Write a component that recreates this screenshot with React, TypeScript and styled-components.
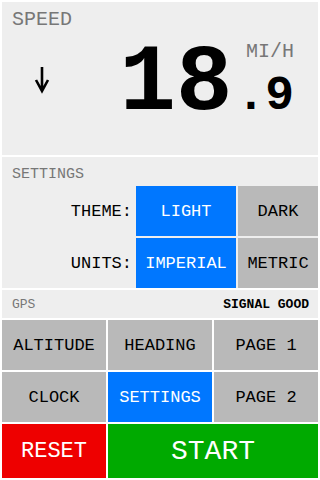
import React from "react";
import styled, { createGlobalStyle } from "styled-components";

const GlobalStyle = createGlobalStyle`
  html, body {
    margin: 0;
    padding: 0;
    background: #ffffff;
  }
  body {
    font-family: "Courier New", "Liberation Mono", monospace;
  }
`;

const Screen = styled.div`
  width: 320px;
  height: 480px;
  box-sizing: border-box;
  padding: 2px;
  display: flex;
  flex-direction: column;
  gap: 2px;
  background: #ffffff;
`;

const Panel = styled.section<{ h: number }>`
  height: ${(p) => p.h}px;
  background: #eeeeee;
  box-sizing: border-box;
  display: flex;
  flex-direction: column;
`;

const PanelTitle = styled.div<{ size: number; top: number }>`
  color: #777777;
  font-size: ${(p) => p.size}px;
  line-height: 1;
  padding: ${(p) => p.top}px 10px 0 10px;
`;

const SpeedRow = styled.div`
  flex: 1;
  display: flex;
  align-items: flex-start;
  padding-right: 24px;
`;

const ArrowBox = styled.div`
  width: 80px;
  display: flex;
  justify-content: center;
  margin-top: 36px;
  padding-right: 1px;
`;

const Whole = styled.div`
  margin-left: auto;
  margin-right: 4px;
  margin-top: 7px;
  font-size: 94px;
  font-weight: bold;
  line-height: 1;
  color: #000;
`;

const DecimalCol = styled.div`
  display: flex;
  flex-direction: column;
  align-items: flex-end;
  gap: 10px;
  margin-top: 12px;
`;

const Unit = styled.div`
  color: #777777;
  font-size: 20px;
  line-height: 1;
`;

const Fraction = styled.div`
  font-size: 48px;
  font-weight: bold;
  line-height: 1;
  color: #000;
`;

const OptionGrid = styled.div`
  margin-top: auto;
  display: grid;
  grid-template-columns: 132px 100px 80px;
  grid-template-rows: 50px 50px;
  gap: 2px;
`;

const OptionLabel = styled.div`
  display: flex;
  align-items: center;
  justify-content: flex-end;
  padding-right: 2px;
  font-size: 17px;
  color: #000;
`;

const Tile = styled.div<{ active?: boolean; size?: number }>`
  display: flex;
  align-items: center;
  justify-content: center;
  background: ${(p) => (p.active ? "#0077ff" : "#b9b9b9")};
  color: ${(p) => (p.active ? "#ffffff" : "#000000")};
  font-size: ${(p) => p.size ?? 17}px;
`;

const GpsBar = styled.div`
  height: 28px;
  background: #eeeeee;
  display: flex;
  align-items: center;
  justify-content: space-between;
  padding: 0 9px 0 10px;
  font-size: 13px;
`;

const GpsLabel = styled.span`
  color: #777777;
`;

const Signal = styled.span`
  color: #000;
  font-weight: bold;
`;

const NavGrid = styled.div`
  display: grid;
  grid-template-columns: 104px 104px 104px;
  grid-template-rows: 50px 50px 54px;
  gap: 2px;
`;

const ActionTile = styled.div<{ tone: "red" | "green"; size: number; span?: number }>`
  grid-column: span ${(p) => p.span ?? 1};
  display: flex;
  align-items: center;
  justify-content: center;
  background: ${(p) => (p.tone === "red" ? "#ee0000" : "#00aa00")};
  color: #ffffff;
  font-size: ${(p) => p.size}px;
`;

const DownArrow = () => (
  <svg width="16" height="28" viewBox="0 0 16 28" aria-hidden="true">
    <path
      d="M8 1 V25 M2 14 L8 25 L14 14"
      fill="none"
      stroke="#000"
      strokeWidth="2.6"
      strokeLinecap="butt"
      strokeLinejoin="miter"
    />
  </svg>
);

export default function App() {
  return (
    <>
      <GlobalStyle />
      <Screen>
        <Panel h={153}>
          <PanelTitle size={20} top={8}>SPEED</PanelTitle>
          <SpeedRow>
            <ArrowBox>
              <DownArrow />
            </ArrowBox>
            <Whole>18</Whole>
            <DecimalCol>
              <Unit>MI/H</Unit>
              <Fraction>.9</Fraction>
            </DecimalCol>
          </SpeedRow>
        </Panel>
        <Panel h={131}>
          <PanelTitle size={15} top={10}>SETTINGS</PanelTitle>
          <OptionGrid>
            <OptionLabel>THEME:</OptionLabel>
            <Tile active>LIGHT</Tile>
            <Tile>DARK</Tile>
            <OptionLabel>UNITS:</OptionLabel>
            <Tile active>IMPERIAL</Tile>
            <Tile>METRIC</Tile>
          </OptionGrid>
        </Panel>
        <GpsBar>
          <GpsLabel>GPS</GpsLabel>
          <Signal>SIGNAL GOOD</Signal>
        </GpsBar>
        <NavGrid>
          <Tile>ALTITUDE</Tile>
          <Tile>HEADING</Tile>
          <Tile>PAGE 1</Tile>
          <Tile>CLOCK</Tile>
          <Tile active>SETTINGS</Tile>
          <Tile>PAGE 2</Tile>
          <ActionTile tone="red" size={22}>RESET</ActionTile>
          <ActionTile tone="green" size={28} span={2}>START</ActionTile>
        </NavGrid>
      </Screen>
    </>
  );
}
